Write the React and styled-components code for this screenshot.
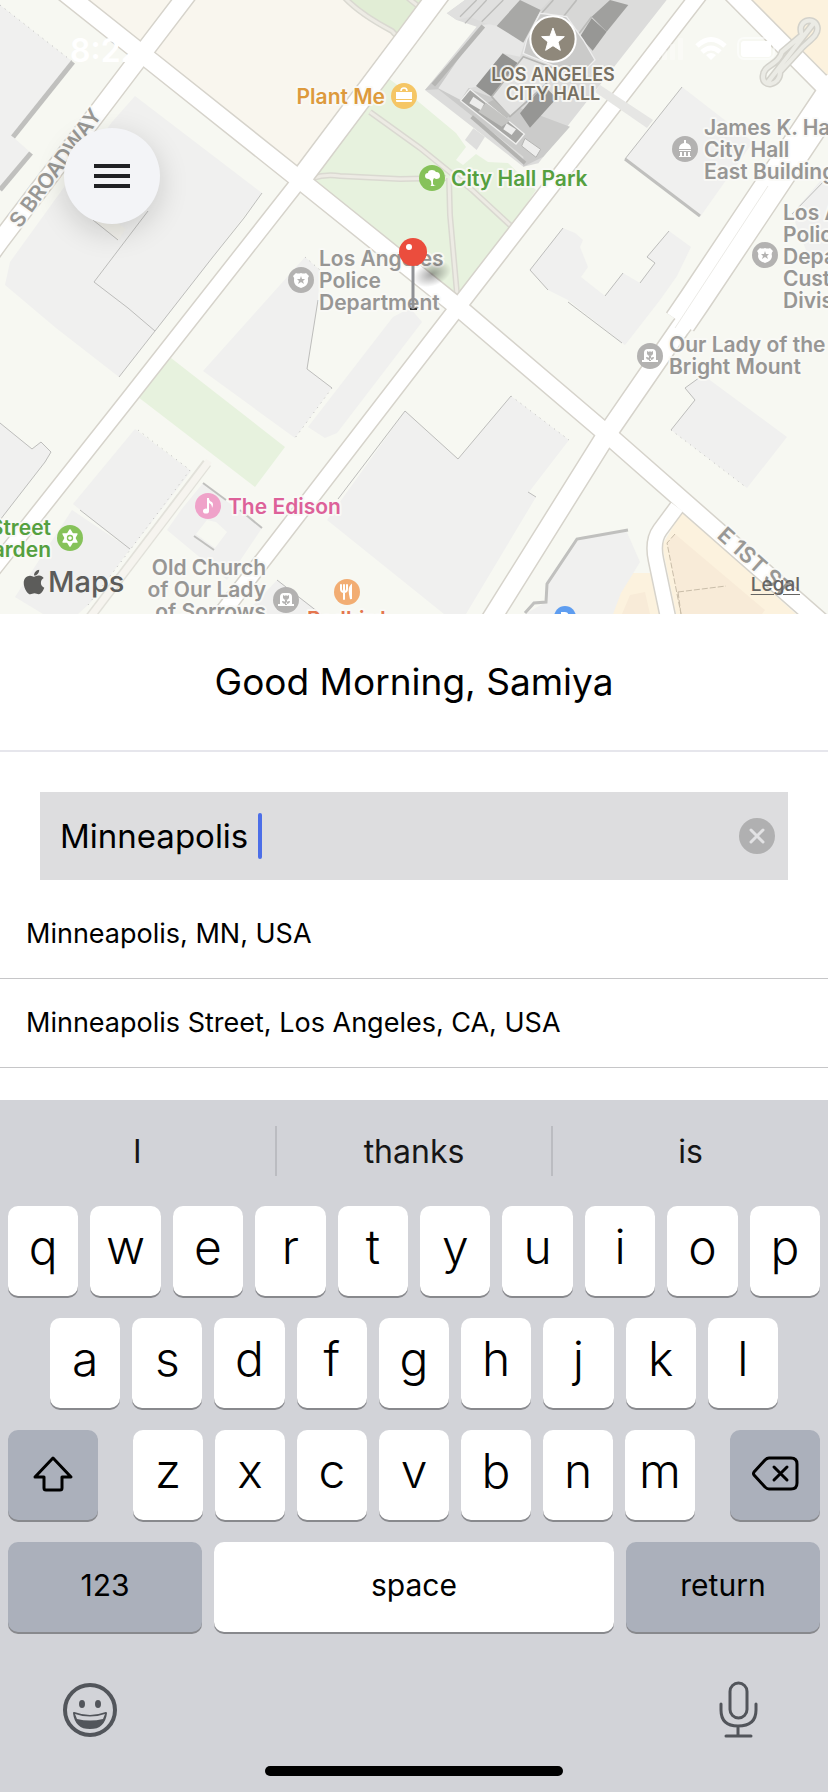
import React, { useState } from 'react';
import styled, { createGlobalStyle } from 'styled-components';
import { FaApple } from 'react-icons/fa';

const GlobalStyle = createGlobalStyle`
  * { box-sizing: border-box; }
  body {
    margin: 0;
    background: #fff;
    color: #000;
    font-family: Inter, "Liberation Sans", sans-serif;
  }
  button, input { font: inherit; color: inherit; }
`;

const Screen = styled.main`
  display: flex;
  flex-direction: column;
  min-height: 100vh;
  overflow-x: hidden;
`;

/* ---------- map ---------- */

const MapArea = styled.section`
  position: relative;
  overflow: hidden;
`;

const MapCanvas = styled.svg`
  display: block;
  width: 100%;
  height: auto;
  font-family: inherit;
`;

const StatusBar = styled.header`
  position: absolute;
  inset: 0 0 auto 0;
  display: flex;
  align-items: center;
  justify-content: space-between;
  height: 100px;
  padding: 0 50px 0 70px;
  color: #fff;
`;

const Clock = styled.time`
  font-size: 32px;
  font-weight: 600;
`;

const MenuButton = styled.button`
  position: absolute;
  top: 128px;
  left: 64px;
  display: flex;
  flex-direction: column;
  align-items: center;
  justify-content: center;
  gap: 6px;
  width: 96px;
  height: 96px;
  padding: 0;
  border: 0;
  border-radius: 50%;
  background: #f3f4f7;
  box-shadow: 0 8px 30px rgba(0, 0, 0, 0.16);
`;

const MenuBar = styled.span`
  width: 36px;
  height: 4px;
  background: #202124;
`;

const Attribution = styled.div`
  position: absolute;
  left: 20px;
  bottom: 12px;
  display: flex;
  align-items: center;
  color: #5c5c5a;
  font-size: 29px;
  font-weight: 500;
  line-height: 40px;
`;

const LegalLink = styled.a`
  position: absolute;
  right: 28px;
  bottom: 17px;
  color: #666563;
  font-size: 19px;
  font-weight: 500;
  line-height: 24px;
  text-underline-offset: 3px;
`;

const PlaceName = styled.text`
  font-size: ${(p) => p.$size || 21}px;
  font-weight: 600;
  fill: ${(p) => p.$color};
  stroke: rgba(250, 250, 247, 0.85);
  stroke-width: 4px;
  stroke-linejoin: round;
  paint-order: stroke;
  text-anchor: ${(p) => p.$anchor || 'start'};
`;

const GREY = '#979694';
const GREEN = '#55a03f';

const glyphs = {
  bag: (
    <g fill="#fff">
      <path d="M-8 -4h16v7h-16zM-8 4h16v1q0 1-1 1h-14q-1 0-1-1z" />
      <path d="M-3 -5q0-3 3-3t3 3" fill="none" stroke="#fff" strokeWidth="1.6" />
    </g>
  ),
  tree: (
    <path
      fill="#fff"
      d="M-1 3l-2-2q-4 0-4-3 0-3 3-3 0-3 4-3 3 0 4 2 4 0 4 4 0 3-4 3l-2-1-1 2v4q1 2 3 2h-6q2 0 1-5z"
    />
  ),
  badge: (
    <g>
      <path fill="#fff" d="M-5-7q2 1 5 0 3 1 5 0l3 3q-2 2-1 5 0 5-7 7-7-2-7-7 1-3-1-5z" />
      <path fill="#b3b2b1" d="M0-4l1 3h3l-2 2 1 3-3-2-3 2 1-3-2-2h3z" />
    </g>
  ),
  dome: (
    <path fill="#fff" d="M-1-9h2v3q5 1 5 6h-12q0-5 5-6zM-6 1h12v1h-12zM-5 3h2v4h-2zM-1 3h2v4h-2zM3 3h2v4h-2zM-6 7h12v1h-12z" />
  ),
  grave: (
    <g>
      <path fill="#fff" d="M-6 4v-7q0-4 4-4h4q4 0 4 4v7h2v2h-16v-2z" />
      <path
        fill="#b3b2b1"
        d="M-3-5l2 1 1-1 1 1 2-1v3q-1 2-3 2t-3-2zM-1 0h2v5h-2z M-4 1q4 0 4 3-4 0-4-3zM4 1q-4 0-4 3 4 0 4-3z"
      />
    </g>
  ),
  note: (
    <g fill="#fff">
      <ellipse cx="-2" cy="5" rx="3" ry="2.6" />
      <path d="M-1-8h2q0 3 3 4 2 2 0 6 0-4-3-5v8h-2z" />
    </g>
  ),
  flower: (
    <g fill="#fff">
      {[0, 60, 120, 180, 240, 300].map((a) => (
        <path key={a} d="M-3-3L0-8L3-3z" transform={`rotate(${a})`} stroke="#fff" strokeWidth="1.5" strokeLinejoin="round" />
      ))}
      <circle r="4" />
      <circle r="2.5" fill="none" stroke="#86c25a" strokeWidth="1.4" />
    </g>
  ),
  fork: (
    <g stroke="#fff" fill="none" strokeLinecap="round">
      <path d="M-6-7v4q0 3 3 3t3-3v-4M-3-7v14" strokeWidth="2" />
      <path d="M4 7v-13q-2 2-1 8z" strokeWidth="2" fill="#fff" />
    </g>
  ),
};

function Marker({ x, y, color, glyph }) {
  return (
    <g transform={`translate(${x} ${y})`}>
      <circle r="13" fill={color} />
      {glyphs[glyph]}
    </g>
  );
}

function Place({ x, y, lines, color = GREY, anchor, size, leading = 22, marker }) {
  return (
    <g>
      {marker && <Marker {...marker} />}
      {lines.map((line, i) => (
        <PlaceName key={line} x={x} y={y + i * leading} $color={color} $anchor={anchor} $size={size}>
          {line}
        </PlaceName>
      ))}
    </g>
  );
}

const greyMarker = (x, y, glyph) => ({ x, y, glyph, color: '#b3b2b1' });

const places = [
  { x: 385, y: 104, anchor: 'end', lines: ['Plant Me'], color: '#dd9a3d', marker: { x: 404, y: 96, color: '#f5c665', glyph: 'bag' } },
  { x: 451, y: 186, lines: ['City Hall Park'], color: GREEN, marker: { x: 432, y: 178, color: '#86c25a', glyph: 'tree' } },
  { x: 319, y: 266, lines: ['Los Angeles', 'Police', 'Department'], marker: greyMarker(301, 280, 'badge') },
  { x: 704, y: 135, lines: ['James K. Hahn', 'City Hall', 'East Building'], marker: greyMarker(685, 149, 'dome') },
  { x: 783, y: 220, lines: ['Los Angeles', 'Police', 'Department', 'Custody', 'Division'], marker: greyMarker(765, 255, 'badge') },
  { x: 669, y: 352, lines: ['Our Lady of the', 'Bright Mount'], marker: greyMarker(650, 356, 'grave') },
  { x: 228, y: 514, lines: ['The Edison'], color: '#dd6199', marker: { x: 208, y: 506, color: '#efa2c9', glyph: 'note' } },
  { x: 51, y: 535, anchor: 'end', lines: ['Street', 'Garden'], color: GREEN, marker: { x: 70, y: 538, color: '#86c25a', glyph: 'flower' } },
  { x: 266, y: 575, anchor: 'end', lines: ['Old Church', 'of Our Lady', 'of Sorrows'], marker: greyMarker(286, 600, 'grave') },
  { x: 307, y: 627, lines: ['Redbird'], color: '#e4764e', marker: { x: 347, y: 592, color: '#f2ad73', glyph: 'fork' } },
];

const buildings = [
  '0,5 73,62 13,137 31,153 0,190',
  '135,96 262,193 212,258 155,331 119,377 56,328 5,285 10,262 62,190 112,122',
  '305,257 320,270 318,300 307,369 332,388 295,438 203,371',
  '308,427 393,317 410,308 422,322 337,433 325,438',
  '405,411 458,459 511,396 569,440 529,492 536,497 466,614 444,614 327,520',
  '135,429 191,471 130,550 73,504',
  '72,510 130,549 90,603 78,614 43,614 15,597',
  '0,423 32,449 41,442 51,452 45,462 0,520',
  '203,483 262,528 227,580 167,530 181,510',
  '277,580 322,614 245,614',
  '626,530 640,562 621,593 613,614 525,614 546,602 546,582 575,541 581,537',
  '703,375 787,437 747,488 671,430 695,400 685,388',
  '563,228 575,233 583,240 580,247 588,267 581,277 605,296 623,273 640,283 655,263 647,257 669,231 691,247 677,276 660,300 625,345 568,300 548,290 530,270',
  '682,87 753,142 700,217 625,159',
  '828,172 792,214 806,250 828,262',
];

const edges = [
  '262,193 244,218 212,258 155,331',
  '93,220 118,240',
  '148,211 94,282 128,308 155,331 119,377',
  '318,300 307,369 332,388',
  '405,411 458,459 511,396',
  '405,411 338,499',
  '0,423 32,449 41,442 51,452 45,462 0,520',
  '80,510 130,549',
  '682,87 625,159',
  '563,228 530,270 548,290',
  '605,296 623,273',
  '640,283 655,263 647,257 669,231',
  '703,375 685,388 695,400 671,430',
  '568,302 622,343',
  '277,580 318,612',
  '828,177 792,214',
  '528,492 536,497',
];

const dottedEdges = [
  '0,5 73,62',
  '138,430 190,470',
  '190,470 130,550 88,605',
  '332,388 295,438',
  '511,396 569,440',
  '671,430 747,488',
  '305,257 320,270',
];

const thickEdges = [
  ['73,62 13,137', 5],
  ['31,153 0,190', 5],
  ['625,159 700,216', 3],
  ['628,530 583,538 577,539 547,584 546,602 534,603 525,613', 3],
  ['203,483 226,500', 2],
  ['240,510 262,528', 2],
  ['194,536 214,550', 2],
];

const roads = [
  { d: 'M64 -8 L142 54 L300 180 L458 307 L607 434 L822 623', w: 17 },
  { d: 'M190 -9 L142 54 L0 241 L-8 252', w: 17 },
  { d: 'M440 -7 L408 36 L300 180', w: 20 },
  { d: 'M300 180 L128 399 L-8 571', w: 14 },
  { d: 'M702 -9 L458 307 L290 525 L216 621', w: 15 },
  { d: 'M840 83 L695 300 L680 322', w: 31 },
  { d: 'M695 308 L680 328 L607 434 L490 621', w: 18 },
  { d: 'M730 -9 L836 98', w: 17 },
  { d: 'M677 507 L660 530 Q652 541 656 560 L669 622', w: 14 },
];

const footpaths = [
  'M313 178 Q325 174 340 176 L400 179 L446 178',
  'M370 112 L420 148 L472 190 L511 226',
  'M449 178 L450 215 L457 294',
  'M345 -2 Q360 14 392 31 L403 43',
  'M408 -2 L428 14',
];

const footbridge =
  'M802 35C796 20 814 16 817 26C820 36 806 42 800 50L780 72C780 86 762 88 763 76C764 64 778 66 782 52L802 35M813 24L768 82';

function CityHall() {
  return (
    <g transform="translate(410 0) scale(0.3333)">
      <polygon points="165,0 110,40 140,60 200,80 45,270 340,500 385,490 770,0" fill="#dcdcdb" />
      <polygon points="220,75 45,270 85,268 340,470 340,500 400,470 480,380 180,268" fill="#cbcbca" />
      <polygon points="215,75 260,70 345,125 330,170 280,160 200,260 175,265 152,300 85,265" fill="#e7e7e6" />
      <polygon points="165,0 330,0 262,78 225,70 180,50 140,60 112,40" fill="#e0e0df" />
      <path d="M230 0L165 70M280 0L215 65M200 0L150 50" stroke="#bdbdbb" strokeWidth="4" />
      <path d="M220 78L70 255" stroke="#b6b6b4" strokeWidth="14" />
      <polygon points="260,78 330,0 392,30 340,128" fill="#a8a8a6" />
      <polygon points="392,30 420,0 600,0 520,100 440,50" fill="#d7d7d6" />
      <path d="M430 0L390 45M500 0L460 50M545 50L500 110" stroke="#bcbcba" strokeWidth="5" />
      <polygon points="545,50 600,0 655,15 590,95" fill="#a0a09e" />
      <polygon points="510,110 545,55 590,95 548,152" fill="#979795" />
      <polygon points="278,160 340,200 245,290 198,258" fill="#939391" />
      <polygon points="330,340 400,255 440,295 360,383" fill="#969694" />
      <polygon points="245,290 340,170 445,210 400,260 300,350" fill="#e3e3e2" stroke="#b5b5b3" strokeWidth="5" />
      <polygon points="350,120 390,40 470,50 520,120 555,180 510,225 450,205 340,160" fill="#cacac9" stroke="#eee" strokeWidth="4" />
      <polygon points="230,310 290,355 300,345 250,300" fill="#bdbdbb" />
      <polygon points="180,268 343,402 318,432 152,302" fill="#a7a7a5" stroke="#f0f0ef" strokeWidth="4" />
      <polygon points="228,308 300,362 275,380 205,335" fill="#c4c4c2" />
      <polygon points="190,290 222,312 212,330 178,310" fill="#ededec" />
      <polygon points="290,370 318,388 305,405 280,388" fill="#ededec" />
      <polygon points="345,415 392,448 378,472 335,438" fill="#eeeeed" stroke="#b5b5b3" strokeWidth="3" />
      <path d="M185 350L345 490" stroke="#b3b3b1" strokeWidth="12" />
      <polygon points="190,385 225,410 200,450 165,420" fill="#dededd" />
      <circle cx="429" cy="117" r="68" fill="#8f887b" stroke="#fff" strokeWidth="6" />
      <path
        d="M429 84L438 109L463 110L444 126L451 151L429 137L407 151L414 126L395 110L420 109Z"
        fill="#fff"
        stroke="#fff"
        strokeWidth="3"
        strokeLinejoin="round"
      />
    </g>
  );
}

function CityMap() {
  return (
    <MapCanvas viewBox="0 0 828 614" role="img" aria-label="Map of downtown Los Angeles">
      <defs>
        <radialGradient id="pinShade">
          <stop offset="0" stopColor="#000" stopOpacity="0.35" />
          <stop offset="1" stopColor="#000" stopOpacity="0" />
        </radialGradient>
      </defs>
      <rect width="828" height="614" fill="#f7f8f2" />
      <polygon points="88,0 172,0 140,44" fill="#f9f6ee" />
      <polygon points="193,0 345,0 403,40 301,170 155,53" fill="#f9f6ee" />
      <polygon points="345,0 435,0 400,42 392,30" fill="#e1edd5" />
      <polygon
        points="312,178 388,78 408,93 456,133 466,147 456,160 463,165 476,154 488,162 508,163 536,190 511,227 458,296"
        fill="#e7f2de"
      />
      <polygon points="171,358 285,447 255,487 138,397" fill="#e7f2de" />
      <polygon points="752,0 828,0 828,76" fill="#fcf2de" />
      <polygon points="682,512 796,614 676,614 662,545" fill="#fcf2de" />
      <polygon points="633,573 652,573 662,614 613,614 615,600" fill="#fcf2de" />
      <polygon points="675,534 765,610 762,614 681,614 667,543" fill="#f8ebd8" />
      <polygon points="630,595 645,592 650,614 622,614" fill="#f8ebd8" />
      <path d="M675 534L667 543L681 614M678 592L726 586M678 592L681 614" fill="none" stroke="#c9bda9" strokeDasharray="6 2" />

      {buildings.map((points) => (
        <polygon key={points} points={points} fill="#f0f0ef" />
      ))}
      <polygon points="93,220 118,240 126,229 103,212" fill="#f3f2ec" />
      <polygon points="207,520 216,522 227,532 215,548 196,534" fill="#f7f8f2" />
      {edges.map((points) => (
        <polyline key={points} points={points} fill="none" stroke="#bdbdbb" />
      ))}
      {dottedEdges.map((points) => (
        <polyline key={points} points={points} fill="none" stroke="#bdbdbb" strokeDasharray="1 5" />
      ))}
      {thickEdges.map(([points, width]) => (
        <polyline key={points} points={points} fill="none" stroke="#c0c0be" strokeWidth={width} />
      ))}

      {footpaths.map((d) => (
        <path key={d} d={d} fill="none" stroke="#dad9d1" strokeWidth="6" />
      ))}
      {footpaths.map((d) => (
        <path key={d} d={d} fill="none" stroke="#edebe4" strokeWidth="3" />
      ))}
      <path d="M207 463L88 620" stroke="#e2e1da" strokeWidth="10" />
      <path d="M209 461L88 620" stroke="#f6f4ef" strokeWidth="7" />

      {roads.map((r) => (
        <path key={r.d} d={r.d} fill="none" stroke="#d6d3cb" strokeWidth={r.w + 3} />
      ))}
      {roads.map((r) => (
        <path key={r.d} d={r.d} fill="none" stroke="#fff" strokeWidth={r.w} />
      ))}
      <path d="M768 186L675 328" stroke="#ebeae6" />
      <polygon points="600,85 653,120 647,128 595,92" fill="#e6e6e4" />

      <CityHall />

      <g fill="none" strokeLinecap="round">
        <path d={footbridge} stroke="#d3d2cb" strokeWidth="7" />
        <path d={footbridge} stroke="#ebebe5" strokeWidth="4" />
      </g>

      <PlaceName $color="#999895" $size={21} transform="translate(20 229) rotate(-54)">
        S BROADWAY
      </PlaceName>
      <PlaceName $color="#999895" $size={22} transform="translate(716 537) rotate(42)">
        E 1ST ST
      </PlaceName>
      <Place x={553} y={81} anchor="middle" size={18} leading={19} color="#777062" lines={['LOS ANGELES', 'CITY HALL']} />
      {places.map((place) => (
        <Place key={`${place.x}-${place.y}`} {...place} />
      ))}
      <circle cx="565" cy="617" r="11" fill="#5e9df0" />
      <path d="M562 620v-7h3a2 2 0 0 1 0 5h-3" fill="none" stroke="#fff" strokeWidth="2" />

      <ellipse cx="432" cy="274" rx="20" ry="12" fill="url(#pinShade)" transform="rotate(-20 432 274)" />
      <path d="M410 309h7" stroke="#333" strokeWidth="2" />
      <path d="M413 262V309" stroke="#8f9195" strokeWidth="3" />
      <circle cx="413" cy="252" r="14" fill="#eb4d3d" />
      <circle cx="409" cy="247" r="3" fill="#fff" />
    </MapCanvas>
  );
}

const StatusIcons = () => (
  <svg width="124" height="28" viewBox="0 0 124 28" fill="#fff" aria-hidden="true">
    <rect x="0" y="18" width="5" height="6" rx="1" />
    <rect x="8" y="14" width="5" height="10" rx="1" opacity=".35" />
    <rect x="16" y="8" width="5" height="16" rx="1" opacity=".35" />
    <rect x="24" y="2" width="5" height="22" rx="1" opacity=".35" />
    <g fill="none" stroke="#fff" strokeWidth="5">
      <path d="M43 10Q57 -3 71 10" />
      <path d="M48 16Q57 8 66 16" />
    </g>
    <path d="M52 19Q57 15 62 19L57 24Z" />
    <rect x="84" y="2" width="36" height="21" rx="6" fill="none" stroke="#fff" strokeWidth="2" opacity=".5" />
    <rect x="87" y="5" width="30" height="16" rx="3" />
  </svg>
);

/* ---------- search sheet ---------- */

const Greeting = styled.h1`
  margin: 0;
  padding: 44px 24px;
  border-bottom: 2px solid #e6e6ec;
  font-size: 37px;
  font-weight: 400;
  line-height: 48px;
  text-align: center;
`;

const SearchField = styled.div`
  display: flex;
  align-items: center;
  height: 88px;
  margin: 40px 40px 10px;
  padding: 0 13px 0 20px;
  background: #dddddf;
`;

const SearchInput = styled.input`
  field-sizing: content;
  min-width: 0;
  padding: 0;
  border: 0;
  outline: 0;
  background: transparent;
  font-size: 33px;
  line-height: 44px;
  caret-color: transparent;
`;

const Caret = styled.span`
  width: 4px;
  height: 46px;
  margin-right: auto;
  border-radius: 2px;
  background: #4c6ee8;
`;

const ClearButton = styled.button`
  display: flex;
  padding: 0;
  border: 0;
  background: none;
`;

const Results = styled.ul`
  margin: 0;
  padding: 0 0 32px;
  list-style: none;
`;

const ResultButton = styled.button`
  display: block;
  width: 100%;
  padding: 28px 26px;
  border: 0;
  border-bottom: 1px solid #c6c6c8;
  background: none;
  font-size: 27px;
  line-height: 32px;
  text-align: left;
`;

/* ---------- keyboard ---------- */

const Keyboard = styled.section`
  flex: 1;
  display: flex;
  flex-direction: column;
  background: #d2d3d8;
`;

const Suggestions = styled.div`
  display: flex;
  align-items: center;
  height: 106px;
  padding-bottom: 4px;
`;

const Suggestion = styled.button`
  flex: 1 1 0;
  height: 50px;
  padding: 0;
  border: 0;
  border-left: ${(p) => (p.$divided ? '2px solid #bbbcc1' : '0')};
  background: none;
  color: #161617;
  font-size: 32px;
`;

const KeyRows = styled.div`
  display: flex;
  flex-direction: column;
  gap: 22px;
  padding: 0 8px;
`;

const KeyRow = styled.div`
  display: flex;
  justify-content: space-between;
  gap: ${(p) => p.$gap || 12}px;
  padding: 0 ${(p) => p.$inset || 0}px;
`;

const LetterGroup = styled.div`
  flex: 1;
  display: flex;
  gap: 12px;
`;

const Key = styled.button`
  flex: ${(p) => (p.$fixed ? '0 0 90px' : `${p.$grow || 1} 1 0`)};
  display: flex;
  align-items: center;
  justify-content: center;
  min-width: 0;
  height: 90px;
  padding: 0 0 ${(p) => (p.$letter ? 10 : 4)}px;
  border: 0;
  border-radius: 10px;
  background: ${(p) => (p.$dark ? '#abb0bb' : '#fff')};
  box-shadow: 0 2px 0 #88898d;
  font-size: ${(p) => (p.$letter ? 48 : 30)}px;
  font-weight: ${(p) => (p.$letter ? 300 : 400)};
`;

const KeyboardFooter = styled.div`
  display: flex;
  align-items: flex-end;
  justify-content: space-between;
  padding: 48px 70px 0 62px;
`;

const ToolButton = styled.button`
  display: flex;
  padding: 0;
  border: 0;
  background: none;
`;

const HomeIndicator = styled.div`
  width: 36%;
  height: 10px;
  margin: auto auto 16px;
  border-radius: 5px;
  background: #000;
`;

const letterKeys = (letters) =>
  [...letters].map((letter) => (
    <Key key={letter} type="button" $letter>
      {letter}
    </Key>
  ));

export default function App() {
  const [query, setQuery] = useState('Minneapolis ');

  return (
    <Screen>
      <GlobalStyle />
      <MapArea>
        <CityMap />
        <StatusBar>
          <Clock>8:22</Clock>
          <StatusIcons />
        </StatusBar>
        <MenuButton type="button" aria-label="Open menu">
          <MenuBar />
          <MenuBar />
          <MenuBar />
        </MenuButton>
        <Attribution>
          <FaApple size={28} aria-hidden="true" />
          Maps
        </Attribution>
        <LegalLink href="#legal">Legal</LegalLink>
      </MapArea>

      <Greeting>Good Morning, Samiya</Greeting>

      <SearchField>
        <SearchInput
          type="text"
          aria-label="Where to?"
          value={query}
          onChange={(event) => setQuery(event.target.value)}
        />
        <Caret />
        <ClearButton type="button" aria-label="Clear search" onClick={() => setQuery('')}>
          <svg width="36" height="36" viewBox="0 0 36 36">
            <circle cx="18" cy="18" r="18" fill="#b0b0b1" />
            <path d="M12 12L24 24M24 12L12 24" stroke="#e2e2e4" strokeWidth="3" strokeLinecap="round" />
          </svg>
        </ClearButton>
      </SearchField>

      <Results>
        {['Minneapolis, MN, USA', 'Minneapolis Street, Los Angeles, CA, USA'].map((result) => (
          <li key={result}>
            <ResultButton type="button">{result}</ResultButton>
          </li>
        ))}
      </Results>

      <Keyboard aria-label="Keyboard">
        <Suggestions>
          {['I', 'thanks', 'is'].map((word, i) => (
            <Suggestion key={word} type="button" $divided={i > 0}>
              {word}
            </Suggestion>
          ))}
        </Suggestions>
        <KeyRows>
          <KeyRow>{letterKeys('qwertyuiop')}</KeyRow>
          <KeyRow $inset={42}>{letterKeys('asdfghjkl')}</KeyRow>
          <KeyRow $gap={35}>
            <Key type="button" $dark $fixed aria-label="Shift">
              <svg width="42" height="38" viewBox="0 0 42 38" fill="none" stroke="#000" strokeWidth="3" strokeLinejoin="round">
                <path d="M21 4L39 23H30V34Q30 36 28 36H14Q12 36 12 34V23H3Z" />
              </svg>
            </Key>
            <LetterGroup>{letterKeys('zxcvbnm')}</LetterGroup>
            <Key type="button" $dark $fixed aria-label="Delete">
              <svg width="48" height="36" viewBox="0 0 48 36" fill="none" stroke="#000" strokeWidth="3" strokeLinejoin="round" strokeLinecap="round">
                <path d="M18 3H40Q46 3 46 9V28Q46 34 40 34H18Q16 34 14 32L3 20Q2 18.500 3 17L14 5Q16 3 18 3Z" />
                <path d="M23 12L36 25M36 12L23 25" />
              </svg>
            </Key>
          </KeyRow>
          <KeyRow>
            <Key type="button" $dark $grow={97}>123</Key>
            <Key type="button" $grow={200}>space</Key>
            <Key type="button" $dark $grow={97}>return</Key>
          </KeyRow>
        </KeyRows>
        <KeyboardFooter>
          <ToolButton type="button" aria-label="Emoji">
            <svg width="56" height="56" viewBox="0 0 56 56" fill="none">
              <circle cx="28" cy="28" r="25" stroke="#52555b" strokeWidth="4" />
              <ellipse cx="20" cy="22" rx="3" ry="4" fill="#52555b" />
              <ellipse cx="36" cy="22" rx="3" ry="4" fill="#52555b" />
              <path d="M12 31Q28 37 44 31Q42 46 28 46Q14 46 12 31Z" stroke="#52555b" strokeWidth="2" strokeLinejoin="round" fill="#52555b" />
              <path d="M13 32Q28 37 43 32L41 37Q28 40 15 37Z" fill="#d2d3d8" />
            </svg>
          </ToolButton>
          <ToolButton type="button" aria-label="Dictate">
            <svg width="40" height="58" viewBox="0 0 40 58" fill="none" stroke="#52555b" strokeWidth="3" strokeLinecap="round">
              <rect x="12" y="3" width="17" height="35" rx="8.500" />
              <path d="M3 24V30Q3 46 20 46Q38 46 38 30V24M20 46V56M8 56H33" />
            </svg>
          </ToolButton>
        </KeyboardFooter>
        <HomeIndicator />
      </Keyboard>
    </Screen>
  );
}
